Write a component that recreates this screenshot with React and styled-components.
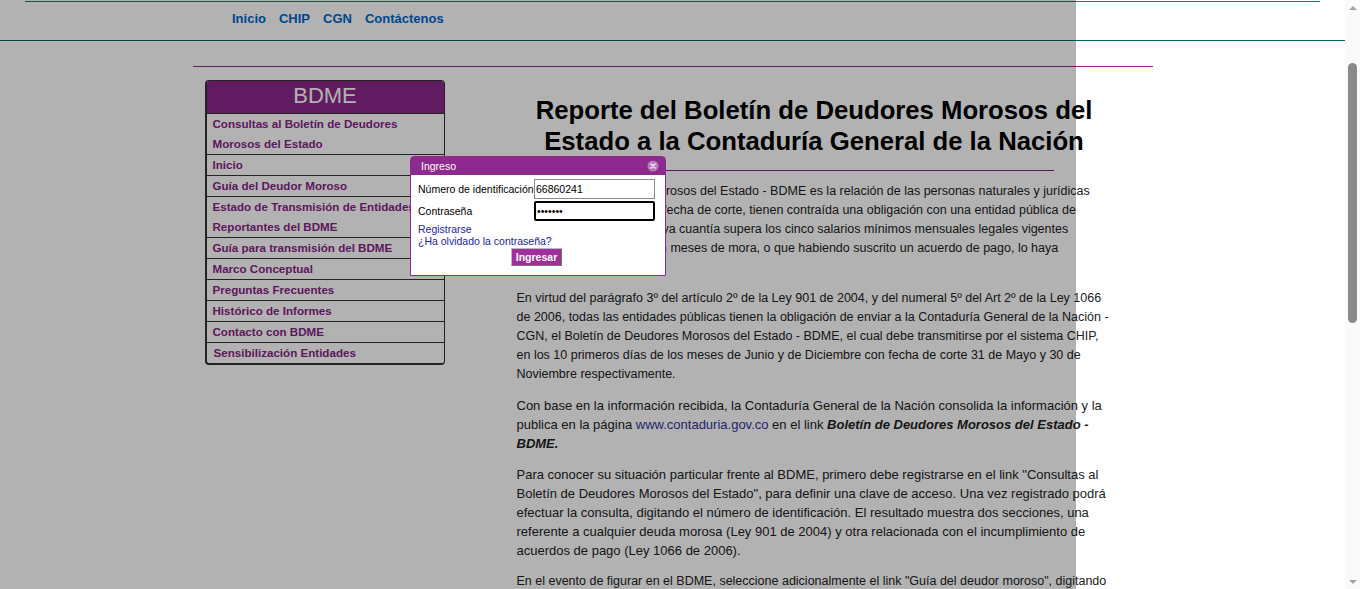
import React, { useLayoutEffect } from "react";
import styled, { createGlobalStyle } from "styled-components";

const SCROLL_TOP = 108;

const GlobalStyle = createGlobalStyle`
  html, body {
    margin: 0;
    padding: 0;
    background: #fff;
  }
  body {
    font-family: "Liberation Sans", Arial, sans-serif;
    color: #222;
  }
`;

const menu = [
  { label: "Consultas al Boletín de Deudores Morosos del Estado" },
  { label: "Inicio" },
  { label: "Guía del Deudor Moroso" },
  { label: "Estado de Transmisión de Entidades Reportantes del BDME" },
  { label: "Guía para transmisión del BDME" },
  { label: "Marco Conceptual" },
  { label: "Preguntas Frecuentes" },
  { label: "Histórico de Informes" },
  { label: "Contacto con BDME" },
  { label: "Sensibilización Entidades", indent: true },
];

const Page = styled.div`
  position: relative;
  width: 1345px;
  min-height: 1266px;
`;

const Banner = styled.header`
  height: 109px;
  display: flex;
  align-items: center;
  padding-left: 232px;
  font-size: 20px;
  font-weight: bold;
  color: #006666;
`;

const TopRule = styled.div`
  margin: 0 25px;
  border-top: 1px solid #1f7f5f;
`;

const Nav = styled.nav`
  height: 38px;
  box-sizing: border-box;
  padding: 9px 0 0 232px;
  display: flex;
  gap: 13px;
`;

const NavLink = styled.a`
  font-size: 13px;
  line-height: 15px;
  font-weight: bold;
  color: #0066cc;
  text-decoration: none;
`;

const NavRule = styled.div`
  border-top: 1px solid #006666;
`;

const Container = styled.div`
  width: 960px;
  margin: 0 auto;
  padding-top: 25px;
`;

const PurpleRule = styled.div`
  border-top: 1px solid #932893;
`;

const Columns = styled.div`
  display: flex;
  align-items: flex-start;
  margin-top: 13px;
`;

const Sidebar = styled.div`
  width: 240px;
  margin-left: 12px;
  box-sizing: border-box;
  border: 1px solid #333;
  border-left-width: 2px;
  border-bottom-width: 2px;
  border-radius: 4px;
  overflow: hidden;
`;

const SideHead = styled.div`
  height: 32px;
  background: #8c278a;
  color: #fff;
  font-size: 22px;
  line-height: 30px;
  text-align: center;
`;

const SideItem = styled.a`
  display: block;
  border-top: 1px solid #333;
  padding: 0 6px 0 ${(p) => (p.$indent ? "7px" : "6px")};
  font-size: 11.6px;
  line-height: 20px;
  font-weight: bold;
  color: #882386;
  text-decoration: none;
`;

const Main = styled.main`
  width: 595px;
  margin-left: 72px;
`;

const Title = styled.h1`
  margin: 15px 0 0;
  font-size: 25.7px;
  line-height: 31px;
  font-weight: bold;
  color: #000;
  text-align: center;
`;

const TitleRule = styled.div`
  width: 480px;
  margin: 13px auto 11px;
  border-top: 1px solid #8b1f8b;
`;

const Para = styled.p`
  margin: 0 0 12px;
  font-size: ${(p) => p.$size || "13px"};
  line-height: 19px;
  color: #222;
`;

const TextLink = styled.a`
  color: #33339f;
  text-decoration: none;
`;

const Footer = styled.footer`
  margin-top: 40px;
  border-top: 1px solid #006666;
  padding: 12px 0;
  text-align: center;
  font-size: 11px;
  color: #555;
`;

const Overlay = styled.div`
  position: fixed;
  left: 0;
  top: 0;
  width: 1076px;
  height: 100%;
  background: rgba(0, 0, 0, 0.3);
  z-index: 10;
`;

/* browser scrollbar, drawn since the headless page hides its own */
const ScrollTrack = styled.div`
  position: fixed;
  right: 0;
  top: 0;
  width: 15px;
  height: 100vh;
  background: #fafafa;
  display: flex;
  flex-direction: column;
  align-items: center;
  z-index: 20;
`;

const Arrow = styled.div`
  height: 15px;
  flex: none;
  display: flex;
  align-items: center;
  justify-content: center;
  margin-top: ${(p) => (p.$down ? "auto" : "0")};

  &::before {
    content: "";
    border-left: 4px solid transparent;
    border-right: 4px solid transparent;
    ${(p) => (p.$down ? "border-top" : "border-bottom")}: 4px solid #a3a3a3;
  }
`;

const Thumb = styled.div`
  width: 9px;
  height: 260px;
  margin-top: 48px;
  border-radius: 5px;
  background: #8a8a8a;
`;

const Dialog = styled.div`
  position: fixed;
  left: 410px;
  top: 156px;
  width: 256px;
  box-sizing: border-box;
  border: 1px solid #8e2a8e;
  border-radius: 4px 4px 0 0;
  background: #fff;
  z-index: 11;
  font-size: 10.5px;
  color: #000;
`;

const DialogBar = styled.div`
  height: 18px;
  background: #8e2a8e;
  color: #fff;
  display: flex;
  align-items: center;
  justify-content: space-between;
  padding: 0 6px 0 10px;
  font-size: 10.5px;
`;

const CloseIcon = styled.svg`
  width: 12px;
  height: 12px;
  display: block;
`;

const DialogBody = styled.div`
  padding: 4px 10px 9px 7px;
`;

const FormGrid = styled.div`
  display: grid;
  grid-template-columns: 116px 121px;
  row-gap: 2px;
  align-items: center;
`;

const Label = styled.label`
  white-space: nowrap;
`;

const Field = styled.input`
  width: 121px;
  height: 20px;
  box-sizing: border-box;
  margin: 0;
  padding: 0 1px;
  font-family: "Liberation Sans", Arial, sans-serif;
  font-size: 10.5px;
  color: #000;
  background: #fff;
  outline: none;
  border: ${(p) => (p.$active ? "2px solid #000" : "1px solid #8a8a8a")};
  border-radius: ${(p) => (p.$active ? "2px" : "0")};
`;

const Links = styled.div`
  margin-top: 2px;
  line-height: 12px;
  display: flex;
  flex-direction: column;
  align-items: flex-start;
`;

const DialogLink = styled.a`
  color: #2424a8;
  text-decoration: none;
`;

const ButtonRow = styled.div`
  display: flex;
  justify-content: center;
  margin-top: 1px;
`;

const Submit = styled.button`
  height: 18px;
  padding: 0 4px;
  margin: 0;
  background: #9e309c;
  color: #fff;
  font-family: "Liberation Sans", Arial, sans-serif;
  font-size: 10.5px;
  font-weight: bold;
  border: 1px solid #c8b0c8;
  border-bottom-color: #777;
  border-right-color: #777;
`;

export default function App() {
  useLayoutEffect(() => {
    window.scrollTo(0, SCROLL_TOP);
  }, []);

  return (
    <Page>
      <GlobalStyle />
      <Banner>Contaduría General de la Nación</Banner>
      <TopRule />
      <Nav>
        <NavLink href="#">Inicio</NavLink>
        <NavLink href="#">CHIP</NavLink>
        <NavLink href="#">CGN</NavLink>
        <NavLink href="#">Contáctenos</NavLink>
      </Nav>
      <NavRule />
      <Container>
        <PurpleRule />
        <Columns>
          <Sidebar>
            <SideHead>BDME</SideHead>
            {menu.map((m) => (
              <SideItem key={m.label} href="#" $indent={m.indent}>
                {m.label}
              </SideItem>
            ))}
          </Sidebar>
          <Main>
            <Title>
              Reporte del Boletín de Deudores Morosos del Estado a la
              Contaduría General de la Nación
            </Title>
            <TitleRule />
            <Para $size="12.5px">
              El Boletín de Deudores Morosos del Estado - BDME es la relación
              de las personas naturales y jurídicas que a cualquier título, a la
              fecha de corte, tienen contraída una obligación con una entidad
              pública de cualquier orden o nivel, cuya cuantía supera los cinco
              salarios mínimos mensuales legales vigentes (SMMLV) y más de seis
              (6) meses de mora, o que habiendo suscrito un acuerdo de pago, lo
              haya incumplido.
            </Para>
            <Para $size="12.5px">
              En virtud del parágrafo 3º del artículo 2º de la Ley 901 de 2004,
              y del numeral 5º del Art 2º de la Ley 1066 de 2006, todas las
              entidades públicas tienen la obligación de enviar a la Contaduría
              General de la Nación - CGN, el Boletín de Deudores Morosos del
              Estado - BDME, el cual debe transmitirse por el sistema CHIP, en
              los 10 primeros días de los meses de Junio y de Diciembre con
              fecha de corte 31 de Mayo y 30 de Noviembre respectivamente.
            </Para>
            <Para>
              Con base en la información recibida, la Contaduría General de la
              Nación consolida la información y la publica en la página{" "}
              <TextLink href="#">www.contaduria.gov.co</TextLink> en el link{" "}
              <b>
                <i>Boletín de Deudores Morosos del Estado - BDME.</i>
              </b>
            </Para>
            <Para>
              Para conocer su situación particular frente al BDME, primero debe
              registrarse en el link "Consultas al Boletín de Deudores Morosos
              del Estado", para definir una clave de acceso. Una vez registrado
              podrá efectuar la consulta, digitando el número de
              identificación. El resultado muestra dos secciones, una referente
              a cualquier deuda morosa (Ley 901 de 2004) y otra relacionada con
              el incumplimiento de acuerdos de pago (Ley 1066 de 2006).
            </Para>
            <Para $size="12.5px">
              En el evento de figurar en el BDME, seleccione adicionalmente el
              link "Guía del deudor moroso", digitando el número de
              identificación, para conocer la entidad que lo reportó, así como
              los datos de contacto de la dependencia ante la cual debe
              ponerse al día con la obligación.
            </Para>
            <Para $size="12.5px">
              Las entidades públicas son las responsables de la veracidad de la
              información reportada; la Contaduría General de la Nación
              únicamente consolida y publica la información transmitida por las
              entidades a través del sistema CHIP.
            </Para>
            <Footer>Contaduría General de la Nación - Bogotá D.C., Colombia</Footer>
          </Main>
        </Columns>
      </Container>

      <Overlay />
      <Dialog>
        <DialogBar>
          <span>Ingreso</span>
          <CloseIcon viewBox="0 0 12 12">
            <circle cx="6" cy="6" r="5.5" fill="#b77db6" />
            <path
              d="M4 4 L8 8 M8 4 L4 8"
              stroke="#f3e6f3"
              strokeWidth="1.6"
              strokeLinecap="round"
            />
          </CloseIcon>
        </DialogBar>
        <DialogBody>
          <FormGrid>
            <Label>Número de identificación</Label>
            <Field type="text" defaultValue="66860241" />
            <Label>Contraseña</Label>
            <Field type="password" defaultValue="1234567" $active />
          </FormGrid>
          <Links>
            <DialogLink href="#">Registrarse</DialogLink>
            <DialogLink href="#">¿Ha olvidado la contraseña?</DialogLink>
          </Links>
          <ButtonRow>
            <Submit type="button">Ingresar</Submit>
          </ButtonRow>
        </DialogBody>
      </Dialog>

      <ScrollTrack aria-hidden="true">
        <Arrow />
        <Thumb />
        <Arrow $down />
      </ScrollTrack>
    </Page>
  );
}
